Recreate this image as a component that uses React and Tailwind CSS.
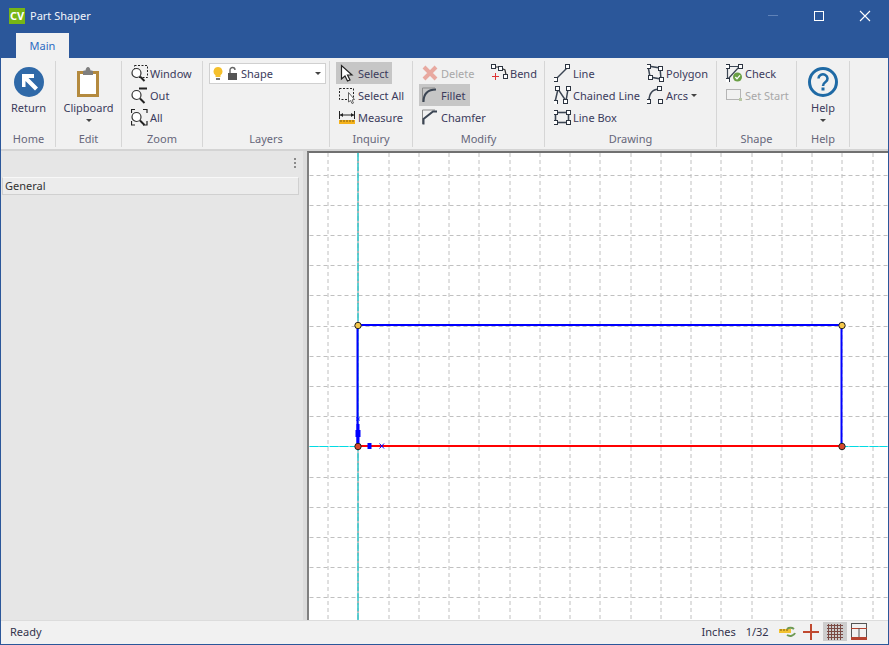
import { useState } from 'react';

const gridX = Array.from({ length: 19 }, (_, i) => 327 + i * 30.25).map(Math.round);
const gridY = Array.from({ length: 15 }, (_, i) => 174.5 + i * 30.2).map(Math.round);

function Icon({ children, w = 18, h = 18 }) {
  return (
    <svg width={w} height={h} viewBox={`0 0 ${w} ${h}`} fill="none" className="shrink-0">
      {children}
    </svg>
  );
}

const Handle = ({ x, y, s = 4 }) => (
  <rect x={x - s / 2 + 0.5} y={y - s / 2 + 0.5} width={s} height={s} fill="#fff" stroke="#2c3440" strokeWidth="1" />
);

const Lens = () => (
  <g>
    <circle cx="5.5" cy="9" r="4.5" fill="#fff" stroke="#333" strokeWidth="1.2" />
    <path d="M9 12.5 L13.5 17" stroke="#222" strokeWidth="2" />
  </g>
);

const icons = {
  window: (
    <Icon>
      <rect x="3.5" y="1.5" width="13" height="12" stroke="#222" strokeDasharray="2 1.5" />
      <Lens />
    </Icon>
  ),
  out: (
    <Icon>
      <path d="M8 2.5 H16" stroke="#222" strokeWidth="2" />
      <Lens />
    </Icon>
  ),
  all: (
    <Icon>
      <path d="M0.5 5V1.5H4M12 1.5H16V5M16 13V17H12M4 17H0.5V13" stroke="#222" strokeWidth="1.2" />
      <Lens />
    </Icon>
  ),
  select: (
    <Icon>
      <path d="M2.5 1.5 V15 L6 12 L8.5 17 L11 16 L8.5 11 L13 11 Z" fill="#fff" stroke="#222" strokeWidth="1.2" />
    </Icon>
  ),
  selectAll: (
    <Icon>
      <rect x="0.5" y="2.5" width="14" height="11" stroke="#222" strokeDasharray="2 1.5" />
      <path d="M9.5 6.5 V16 L11.5 14.5 L13 17.5 L14.5 17 L13 14 L15.5 13.5 Z" fill="#fff" stroke="#555" strokeWidth="0.9" />
    </Icon>
  ),
  measure: (
    <Icon>
      <path d="M0.5 3V11M15.5 3V11M1 7H15" stroke="#222" />
      <path d="M1 7L4 5V9ZM15 7L12 5V9Z" fill="#222" />
      <rect x="0" y="12" width="16" height="4" fill="#f5b21b" />
      <path d="M2 12v2M5 12v2M8 12v2M11 12v2M14 12v2" stroke="#7a5a10" />
    </Icon>
  ),
  del: (
    <Icon>
      <path d="M2 3L14 15M14 3L2 15" stroke="#e8a9a0" strokeWidth="4" />
    </Icon>
  ),
  fillet: (
    <Icon>
      <path d="M0.5 16V2H13" stroke="#8b8b8b" />
      <path d="M1.5 16C1.5 8 6 3.5 14 3.5" stroke="#3c4654" strokeWidth="2" />
    </Icon>
  ),
  chamfer: (
    <Icon>
      <path d="M0.5 16V2H13" stroke="#8b8b8b" />
      <path d="M1.5 16.5V11L11 3.5H15" stroke="#3c4654" strokeWidth="2" />
    </Icon>
  ),
  bend: (
    <Icon>
      <path d="M2 3H8L14 6L15.5 13" stroke="#333" strokeWidth="1.2" />
      <Handle x={2} y={2} />
      <Handle x={9} y={4} />
      <Handle x={14} y={12} />
      <path d="M1 12.5H8M4.5 9V16" stroke="#d33" />
    </Icon>
  ),
  line: (
    <Icon>
      <path d="M2 15L13 4" stroke="#3c4654" strokeWidth="1.5" />
      <Handle x={1} y={15} />
      <Handle x={13} y={2} />
    </Icon>
  ),
  chained: (
    <Icon>
      <path d="M1 16L4 3L12 15L14 3" stroke="#3c4654" strokeWidth="1.5" />
      <Handle x={1} y={16} />
      <Handle x={3} y={2} />
      <Handle x={11} y={15} />
      <Handle x={14} y={2} />
    </Icon>
  ),
  box: (
    <Icon>
      <rect x="1.5" y="4.5" width="13" height="10" stroke="#3c4654" strokeWidth="1.6" />
      <Handle x={1} y={4} />
      <Handle x={14} y={4} />
      <Handle x={1} y={14} />
      <Handle x={14} y={14} />
    </Icon>
  ),
  polygon: (
    <Icon>
      <path d="M1 2L13 4L14 15L3 13Z" stroke="#3c4654" strokeWidth="1.5" />
      <Handle x={1} y={2} />
      <Handle x={13} y={4} />
      <Handle x={14} y={15} />
      <Handle x={3} y={13} />
    </Icon>
  ),
  arcs: (
    <Icon>
      <path d="M2 15C2 8 5 3 13 3" stroke="#3c4654" strokeWidth="1.5" />
      <Handle x={1} y={15} />
      <Handle x={12} y={2} />
      <Handle x={13} y={15} />
    </Icon>
  ),
  check: (
    <Icon>
      <path d="M1 2.5H14M1.5 2V16M2 15L13 3" stroke="#3c4654" strokeWidth="1.2" />
      <Handle x={1} y={2} />
      <Handle x={14} y={2} />
      <Handle x={1} y={16} />
      <circle cx="11.5" cy="13" r="4.5" fill="#6a9f45" />
      <path d="M9.3 13L11 14.8L14 11.3" stroke="#fff" strokeWidth="1.3" />
    </Icon>
  ),
  setStart: (
    <Icon>
      <rect x="0.5" y="3.5" width="14" height="10" stroke="#b5b5b5" />
      <rect x="13" y="12" width="3" height="3" fill="#b9c8a5" />
    </Icon>
  ),
};

function Btn({ icon, label, active, disabled, caret, w }) {
  return (
    <div
      className={`h-[22px] flex items-center gap-[1px] pl-[3px] ${w} ${active ? 'bg-[#c6c6c6]' : ''} ${
        disabled ? 'text-[#a8a8a8]' : 'text-[#3b3b5c]'
      }`}
    >
      {icons[icon]}
      <span className="whitespace-nowrap">{label}</span>
      {caret && <Caret className="ml-[2px]" />}
    </div>
  );
}

function Caret({ className = '' }) {
  return <div className={`w-0 h-0 border-x-[3px] border-x-transparent border-t-[3px] border-t-[#444] ${className}`} />;
}

function Group({ label, w, children, className = '' }) {
  return (
    <div className={`${w} shrink-0 flex flex-col h-[86px] mt-[3px] border-r border-[#d6d6d6]`}>
      <div className={`h-[66px] ${className}`}>{children}</div>
      <div className="h-[20px] flex items-center justify-center text-[#66667a] pt-[2px]">{label}</div>
    </div>
  );
}

function LargeBtn({ icon, label, caret }) {
  return (
    <div className="flex flex-col items-center h-full text-[#3b3b5c]">
      <div className="h-[38px] shrink-0 flex items-center justify-center mt-[2px]">{icon}</div>
      <div className="leading-[16px] -mt-[1px]">{label}</div>
      {caret && <Caret className="mt-[3px]" />}
    </div>
  );
}

function Canvas() {
  return (
    <svg viewBox="309 153 578 467" className="w-full h-full block bg-white">
      {gridX.map((x) => (
        <line key={x} x1={x + 0.5} x2={x + 0.5} y1="153" y2="620" stroke="#c0c0c0" strokeDasharray="4 3" />
      ))}
      {gridY.map((y) => (
        <line key={y} x1="309" x2="887" y1={y + 0.5} y2={y + 0.5} stroke="#c0c0c0" strokeDasharray="4 3" />
      ))}
      <line x1="357.5" x2="357.5" y1="153" y2="620" stroke="#7f8a8c" />
      <line x1="357.5" x2="357.5" y1="153" y2="620" stroke="#00dce4" strokeDasharray="8 2" />
      <line x1="309" x2="887" y1="446.5" y2="446.5" stroke="#00dce4" strokeDasharray="9 1" />
      {/* origin marker */}
      <path d="M375 446.5H367" stroke="#0000ff" />
      <path d="M357 325H841M357 324V446M841 324V446" stroke="#0000ff" strokeWidth="2" fill="none" />
      <line x1="357" x2="841" y1="446" y2="446" stroke="#ff0000" strokeWidth="2" />
      <rect x="356" y="424" width="3" height="22" fill="#0000ff" />
      <rect x="355" y="430" width="5" height="7" fill="#0000ff" />
      <path d="M355.5 417.5l4 3M359.5 417.5l-4 3" stroke="#0000ff" strokeWidth="0.8" />
      <rect x="367" y="443" width="4" height="6" fill="#0000ff" />
      <path d="M379 443.5l4.5 5M383.5 443.5l-4.5 5" stroke="#0000ff" strokeWidth="1" />
      <circle cx="357.5" cy="325.5" r="3.2" fill="#f5c84a" stroke="#222" />
      <circle cx="841.5" cy="325.5" r="3.2" fill="#f5c84a" stroke="#222" />
      <circle cx="357.5" cy="446.5" r="3.2" fill="#d9482b" stroke="#222" />
      <circle cx="841.5" cy="446.5" r="3.2" fill="#d9482b" stroke="#222" />
    </svg>
  );
}

export default function App() {
  const [tab] = useState('Main');

  return (
    <div
      className="w-[889px] h-[645px] flex flex-col overflow-hidden bg-[#2b579a] px-px pb-px text-[11px] leading-none"
      style={{ fontFamily: '"Noto Sans", "Open Sans", sans-serif' }}
    >
      {/* Title bar */}
      <div className="h-[33px] shrink-0 flex items-center text-white pb-[2px]">
        <div className="w-[16px] h-[16px] ml-[8px] bg-[#77b516] text-white text-[11px] font-bold flex items-center justify-center">
          CV
        </div>
        <span className="ml-[5px] text-[11px] text-[#f2f5fa]">Part Shaper</span>
        <div className="ml-auto flex items-center">
          <div className="w-[46px] flex justify-center">
            <div className="w-[10px] h-px bg-[#5f82b8]" />
          </div>
          <div className="w-[46px] flex justify-center">
            <div className="w-[10px] h-[10px] border border-white" />
          </div>
          <div className="w-[46px] flex justify-center">
            <svg width="12" height="12" viewBox="0 0 12 12" stroke="#fff" strokeWidth="1.1">
              <path d="M1 1L11 11M11 1L1 11" />
            </svg>
          </div>
        </div>
      </div>

      {/* Tabs */}
      <div className="h-[25px] shrink-0 pl-[15px] flex items-end">
        <div className="w-[53px] h-[25px] bg-[#f1f1f1] text-[#2b6ac2] flex items-center justify-center">{tab}</div>
      </div>

      {/* Ribbon */}
      <div className="h-[93px] shrink-0 bg-[#f1f1f1] flex pl-[1px] border-b-2 border-[#d4d4d4]">
        <Group label="Home" w="w-[54px]">
          <LargeBtn
            label="Return"
            icon={
              <svg width="30" height="30" viewBox="0 0 30 30">
                <circle cx="15" cy="15" r="15" fill="#2f69a8" />
                <path d="M8 7H20V11H14.5L24 20.5L21 23.5L11.5 14V20H8Z" fill="#fff" />
              </svg>
            }
          />
        </Group>
        <Group label="Edit" w="w-[66px]">
          <LargeBtn
            caret
            label="Clipboard"
            icon={
              <svg width="23" height="30" viewBox="0 0 23 30">
                <rect x="1.5" y="5.5" width="19" height="23" fill="#fff" stroke="#b48a3e" strokeWidth="3" />
                <path d="M6 8V4.5Q6 3.5 7.5 3.5H8.5Q9 0 11 0Q13 0 13.5 3.5H14.5Q16 3.5 16 4.5V8Z" fill="#7f7f7f" />
              </svg>
            }
          />
        </Group>
        <Group label="Zoom" w="w-[81px]" className="pl-[6px] pt-[1px]">
          <Btn icon="window" label="Window" />
          <Btn icon="out" label="Out" />
          <Btn icon="all" label="All" />
        </Group>
        <Group label="Layers" w="w-[127px]" className="pl-[6px] pt-[2px]">
          <div className="w-[117px] h-[21px] bg-white border border-[#d0d0d0] flex items-center pl-[3px] pr-[4px] text-[#3b3b5c]">
            <svg width="28" height="15" viewBox="0 0 28 15" className="shrink-0">
              <path d="M5 1a4.5 4.5 0 0 1 2.5 8.2V11H2.5V9.2A4.5 4.5 0 0 1 5 1Z" fill="#f5c02c" />
              <rect x="3" y="12" width="4" height="2" fill="#777" />
              <rect x="15" y="7" width="9" height="7" fill="#555" />
              <path d="M17 7V4a2.5 2.5 0 0 1 5 0" stroke="#666" strokeWidth="1.4" fill="none" />
            </svg>
            <span>Shape</span>
            <Caret className="ml-auto" />
          </div>
        </Group>
        <Group label="Inquiry" w="w-[83px]" className="pl-[6px] pt-[1px]">
          <Btn icon="select" label="Select" active w="w-[56px]" />
          <Btn icon="selectAll" label="Select All" />
          <Btn icon="measure" label="Measure" />
        </Group>
        <Group label="Modify" w="w-[132px]" className="pl-[6px] pt-[1px] flex">
          <div className="w-[69px]">
            <Btn icon="del" label="Delete" disabled />
            <Btn icon="fillet" label="Fillet" active w="w-[51px]" />
            <Btn icon="chamfer" label="Chamfer" />
          </div>
          <Btn icon="bend" label="Bend" />
        </Group>
        <Group label="Drawing" w="w-[172px]" className="pl-[6px] pt-[1px] flex">
          <div className="w-[93px]">
            <Btn icon="line" label="Line" />
            <Btn icon="chained" label="Chained Line" />
            <Btn icon="box" label="Line Box" />
          </div>
          <div>
            <Btn icon="polygon" label="Polygon" />
            <Btn icon="arcs" label="Arcs" caret />
          </div>
        </Group>
        <Group label="Shape" w="w-[80px]" className="pl-[6px] pt-[1px]">
          <Btn icon="check" label="Check" />
          <Btn icon="setStart" label="Set Start" disabled />
        </Group>
        <Group label="Help" w="w-[53px]">
          <LargeBtn
            caret
            label="Help"
            icon={
              <svg width="30" height="30" viewBox="0 0 30 30" fill="none">
                <circle cx="15" cy="15" r="13.5" stroke="#1f6aa5" strokeWidth="3" />
                <path d="M10.5 11.5a4.5 4.2 0 1 1 7 3.5c-1.8 1.2-2.5 2-2.5 4" stroke="#1f6aa5" strokeWidth="2.6" />
                <rect x="13.5" y="20.5" width="3" height="3" fill="#1f6aa5" />
              </svg>
            }
          />
        </Group>
      </div>

      {/* Body */}
      <div className="flex-1 min-h-0 flex bg-[#e6e6e6]">
        <div className="w-[302px] shrink-0 flex flex-col px-[1px]">
          <div className="h-[26px] shrink-0 flex items-center justify-end pr-[6px] pb-[2px]">
            <div className="flex flex-col gap-[2px]">
              <div className="w-[2px] h-[2px] bg-[#8a8a8a]" />
              <div className="w-[2px] h-[2px] bg-[#8a8a8a]" />
              <div className="w-[2px] h-[2px] bg-[#8a8a8a]" />
            </div>
          </div>
          <div className="w-[297px] h-[18px] bg-[#ececec] border border-[#d0d0d0] border-t-[#f8f8f8] flex items-center pl-[2px] pb-[2px] text-[#333]">
            General
          </div>
        </div>
        <div className="w-[4px] shrink-0 bg-[#dcdcdc]" />
        <div className="flex-1 min-w-0 border-l-2 border-t-2 border-l-[#808080] border-t-[#707070]">
          <Canvas />
        </div>
      </div>

      {/* Status bar */}
      <div className="h-[24px] shrink-0 bg-[#f1f1f1] flex items-center text-[#33334d] border-t border-[#dcdcdc] pb-[2px]">
        <span className="ml-[9px]">Ready</span>
        <span className="ml-[660px]">Inches</span>
        <span className="ml-[10px]">1/32</span>
        <svg width="17" height="12" viewBox="0 0 17 12" className="ml-[10px] shrink-0">
          <rect x="0" y="3" width="12" height="4" fill="#f2c230" />
          <path d="M2 3v2M5 3v2M8 3v2" stroke="#7a5a10" />
          <path d="M8 9a5 4 0 0 0 8-2M15 3a5 4 0 0 0-7 0" stroke="#6f9a55" strokeWidth="2" fill="none" />
        </svg>
        <svg width="16" height="16" viewBox="0 0 16 16" className="ml-[7px] shrink-0">
          <path d="M0 8H16M8 0V16" stroke="#c0492f" strokeWidth="2" />
        </svg>
        <div className="ml-[4px] w-[24px] h-[19px] shrink-0 bg-[#cdcdcd] flex items-center justify-center">
          <svg width="16" height="16" viewBox="0 0 16 16" stroke="#7a4a44">
            <path d="M0 1.5H16M0 4.5H16M0 7.5H16M0 10.5H16M0 13.5H16M1.5 0V16M4.5 0V16M7.5 0V16M10.5 0V16M13.5 0V16" />
          </svg>
        </div>
        <svg width="16" height="17" viewBox="0 0 16 17" className="ml-[4px] shrink-0" fill="none">
          <rect x="0.5" y="0.5" width="15" height="16" stroke="#555" />
          <path d="M0 5.5H16" stroke="#b5432f" />
          <path d="M8 5V15" stroke="#555" />
          <rect x="0" y="14" width="16" height="3" fill="#b5432f" />
        </svg>
      </div>
    </div>
  );
}
